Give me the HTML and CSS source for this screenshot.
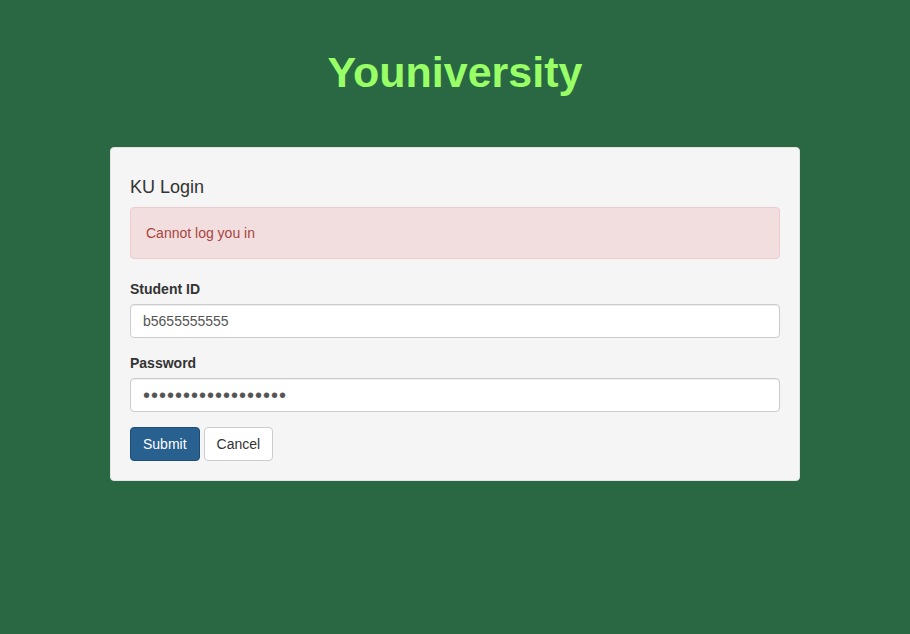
FILE: index.html
```html
<!DOCTYPE html>
<html lang="en">
<head>
<meta charset="utf-8">
<title>Youniversity</title>
<link rel="stylesheet" href="styles.css">
</head>
<body>
<div class="page">
  <h1 class="brand">Youniversity</h1>
  <div class="well">
    <h4 class="well-title">KU Login</h4>
    <div class="alert">Cannot log you in</div>
    <form class="form">
      <div class="form-group">
        <label class="label" for="sid">Student ID</label>
        <input class="input" id="sid" type="text" value="b5655555555">
      </div>
      <div class="form-group">
        <label class="label" for="pw">Password</label>
        <input class="input input-pw" id="pw" type="password" value="xxxxxxxxxxxxxxxxxx">
      </div>
      <div class="actions">
        <button type="button" class="btn btn-primary">Submit</button>
        <button type="button" class="btn btn-default">Cancel</button>
      </div>
    </form>
  </div>
</div>
</body>
</html>
```
FILE: styles.css
```css
* { box-sizing: border-box; }
html, body {
  margin: 0;
  padding: 0;
  height: 100%;
}
body {
  background: #2a6844;
  font-family: "Liberation Sans", Arial, Helvetica, sans-serif;
  font-size: 14px;
  line-height: 20px;
  color: #333;
}
.page {
  padding-top: 48px;
  display: flex;
  flex-direction: column;
  align-items: center;
}
.brand {
  margin: 0 0 50px;
  font-size: 43px;
  line-height: 49px;
  font-weight: bold;
  color: #99ff66;
}
.well {
  width: 690px;
  background: #f5f5f5;
  border: 1px solid #e3e3e3;
  border-radius: 4px;
  padding: 19px;
}
.well-title {
  margin: 10px 0;
  font-size: 18px;
  line-height: 20px;
  font-weight: 500;
  color: #333;
}
.alert {
  background: #f2dede;
  border: 1px solid #ebccd1;
  border-radius: 4px;
  color: #a94442;
  padding: 15px;
  margin-bottom: 20px;
}
.form-group {
  margin-bottom: 15px;
}
.label {
  display: block;
  font-weight: bold;
  margin-bottom: 5px;
}
.input {
  display: block;
  width: 100%;
  height: 34px;
  padding: 6px 12px;
  font-family: inherit;
  font-size: 14px;
  line-height: 20px;
  color: #555;
  background: #fff;
  border: 1px solid #ccc;
  border-radius: 4px;
  box-shadow: inset 0 1px 1px rgba(0,0,0,0.075);
}
.input-pw {
  font-size: 20px;
  letter-spacing: 1px;
  padding-top: 5px;
  padding-bottom: 5px;
}
.actions {
  display: flex;
  gap: 4px;
}
.btn {
  display: inline-block;
  height: 34px;
  padding: 6px 12px;
  font-family: inherit;
  font-size: 14px;
  line-height: 20px;
  border: 1px solid transparent;
  border-radius: 4px;
  cursor: pointer;
}
.btn-primary {
  background: #286090;
  border-color: #204d74;
  color: #fff;
}
.btn-default {
  background: #fff;
  border-color: #ccc;
  color: #333;
}
```
